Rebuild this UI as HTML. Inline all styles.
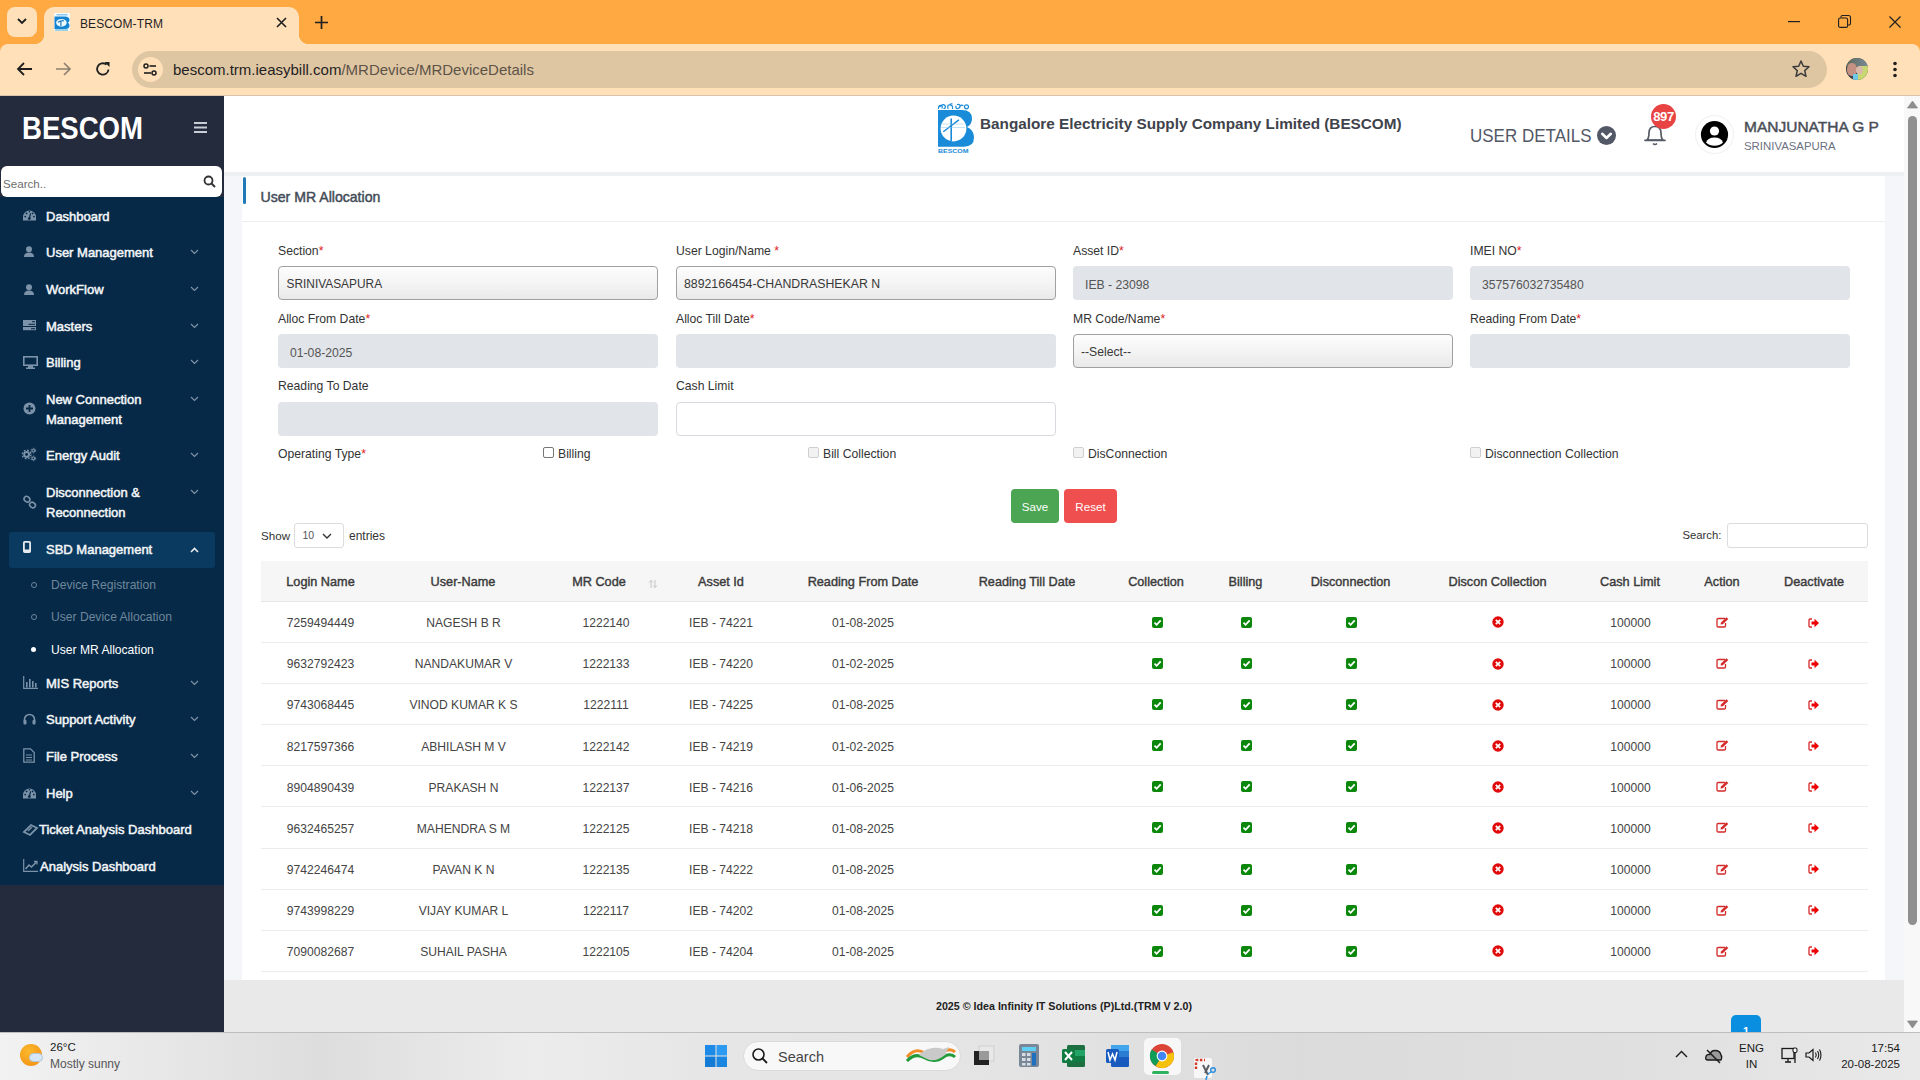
<!DOCTYPE html>
<html><head><meta charset="utf-8"><title>BESCOM-TRM</title>
<style>
*{box-sizing:border-box;margin:0;padding:0}
html,body{width:1920px;height:1080px;overflow:hidden;background:#f4f6f9;font-family:"Liberation Sans",sans-serif}
.a{position:absolute}
svg.a{overflow:visible}
.t{position:absolute;white-space:nowrap;line-height:1;font-family:"Liberation Sans",sans-serif}
</style></head><body>
<div class="a" style="left:0px;top:0px;width:1920px;height:56px;background:#ffa943"></div>
<div class="a" style="left:0px;top:44px;width:1920px;height:52px;background:#ffe0b9;border-radius:8px 8px 0 0"></div>
<div class="a" style="left:0px;top:95px;width:1920px;height:1px;background:#d8c4a8"></div>
<div class="a" style="left:7px;top:7px;width:30px;height:30px;background:#ffe0b9;border-radius:8px"></div>
<svg class="a" style="left:16px;top:17px;" width="12" height="8" viewBox="0 0 12 8"><path d="M2 2 L6 6 L10 2" stroke="#1f1f1f" stroke-width="1.8" fill="none"/></svg>
<div class="a" style="left:44px;top:7px;width:255px;height:40px;background:#ffe0b9;border-radius:10px 10px 0 0"></div>
<div class="a" style="left:34px;top:34px;width:10px;height:10px;background:radial-gradient(circle at 0 0, #ffa943 10px, #ffe0b9 10.5px)"></div>
<div class="a" style="left:299px;top:34px;width:10px;height:10px;background:radial-gradient(circle at 100% 0, #ffa943 10px, #ffe0b9 10.5px)"></div>
<svg class="a" style="left:54px;top:13px;" width="16" height="18" viewBox="0 0 16 18"><rect x="0" y="0" width="16" height="18" fill="#f4fbff"/><path d="M0.5 3.5 H11 Q15.5 3.5 15.5 7 Q15.5 9 13.8 9.7 Q15.5 10.5 15.5 12.5 Q15.5 16 11 16 H0.5 Z" fill="#1484d0"/><ellipse cx="7.4" cy="9.8" rx="5.3" ry="3.9" fill="#eafaff"/><path d="M4 9.3 Q7 7.3 9.8 7.8 M6.9 8.3 V13.2" stroke="#2a7ab8" stroke-width="1.2" fill="none"/><rect x="2.5" y="1" width="11" height="1.5" fill="#8cc8f0"/><rect x="1" y="16.3" width="13" height="1.4" fill="#70c0e0"/></svg>
<div class="t" style="left:80px;top:17.84px;font-size:12px;font-weight:normal;color:#1f1f1f;letter-spacing:0.1px">BESCOM-TRM</div>
<svg class="a" style="left:275px;top:16px;" width="13" height="13" viewBox="0 0 13 13"><path d="M2 2 L11 11 M11 2 L2 11" stroke="#1f1f1f" stroke-width="1.6"/></svg>
<svg class="a" style="left:314px;top:15px;" width="15" height="15" viewBox="0 0 15 15"><path d="M7.5 1 V14 M1 7.5 H14" stroke="#1f1f1f" stroke-width="1.7"/></svg>
<svg class="a" style="left:1788px;top:21px;" width="12" height="2" viewBox="0 0 12 2"><rect width="12" height="1.2" fill="#1f1f1f"/></svg>
<svg class="a" style="left:1838px;top:15px;" width="13" height="13" viewBox="0 0 13 13"><rect x="0.6" y="3" width="9" height="9.4" rx="1.5" fill="none" stroke="#1f1f1f" stroke-width="1.1"/><path d="M3 2.5 V2 a1.5 1.5 0 0 1 1.5 -1.5 H10.5 a2 2 0 0 1 2 2 V8.5 a1.5 1.5 0 0 1 -1.5 1.5 H10" fill="none" stroke="#1f1f1f" stroke-width="1.1"/></svg>
<svg class="a" style="left:1889px;top:16px;" width="12" height="12" viewBox="0 0 12 12"><path d="M0.5 0.5 L11.5 11.5 M11.5 0.5 L0.5 11.5" stroke="#1f1f1f" stroke-width="1.2"/></svg>
<svg class="a" style="left:16px;top:61px;" width="17" height="16" viewBox="0 0 17 16"><path d="M16 8 H2 M8 2 L2 8 L8 14" stroke="#1f1f1f" stroke-width="1.8" fill="none"/></svg>
<svg class="a" style="left:55px;top:61px;" width="17" height="16" viewBox="0 0 17 16"><path d="M1 8 H15 M9 2 L15 8 L9 14" stroke="#8c7f6f" stroke-width="1.6" fill="none"/></svg>
<svg class="a" style="left:95px;top:61px;" width="16" height="16" viewBox="0 0 16 16"><path d="M13.5 8.5 A5.7 5.7 0 1 1 11.5 3.6" stroke="#1f1f1f" stroke-width="1.8" fill="none"/><path d="M9.5 1 H14.5 V6 Z" fill="#1f1f1f"/></svg>
<div class="a" style="left:132px;top:51px;width:1695px;height:37px;background:#dfc6a3;border-radius:19px"></div>
<div class="a" style="left:138px;top:57px;width:25px;height:25px;background:#ffe0b9;border-radius:50%"></div>
<svg class="a" style="left:142px;top:61px;" width="17" height="17" viewBox="0 0 17 17"><circle cx="4" cy="5" r="2" fill="none" stroke="#1f1f1f" stroke-width="1.5"/><path d="M7.5 5 H14" stroke="#1f1f1f" stroke-width="1.6"/><circle cx="12" cy="12" r="2" fill="none" stroke="#1f1f1f" stroke-width="1.5"/><path d="M2 12 H9" stroke="#1f1f1f" stroke-width="1.6"/></svg>
<div class="t" style="left:173px;top:61.80px;font-size:15px;font-weight:normal;color:#1f1f1f;">bescom.trm.ieasybill.com<span style="color:#5c5347">/MRDevice/MRDeviceDetails</span></div>
<svg class="a" style="left:1791px;top:59px;" width="20" height="20" viewBox="0 0 20 20"><path d="M10 2 L12.3 7.3 L18 7.8 L13.7 11.6 L15 17.3 L10 14.3 L5 17.3 L6.3 11.6 L2 7.8 L7.7 7.3 Z" fill="none" stroke="#3b3b3b" stroke-width="1.5" stroke-linejoin="round"/></svg>
<div class="a" style="left:1846px;top:58px;width:22px;height:22px;border-radius:50%;overflow:hidden;background:#3a4048"><div class="a" style="left:12px;top:6px;width:12px;height:16px;background:#c8d870"></div><div class="a" style="left:0;top:0;width:22px;height:8px;background:linear-gradient(90deg,#5a6a58,#7a8a98)"></div><div class="a" style="left:1px;top:5px;width:10px;height:13px;border-radius:45%;background:#c49080"></div><div class="a" style="left:10px;top:8px;width:7px;height:8px;border-radius:45%;background:#d8b8a8"></div><div class="a" style="left:7px;top:16px;width:5px;height:8px;background:#70c8e8"></div></div>
<svg class="a" style="left:1892px;top:61px;" width="6" height="17" viewBox="0 0 6 17"><circle cx="3" cy="2.5" r="1.8" fill="#1f1f1f"/><circle cx="3" cy="8.5" r="1.8" fill="#1f1f1f"/><circle cx="3" cy="14.5" r="1.8" fill="#1f1f1f"/></svg>
<div class="a" style="left:0px;top:96px;width:224px;height:936px;background:#232b3d"></div>
<div class="a" style="left:0px;top:197px;width:224px;height:688px;background:#052947"></div>
<div class="t" style="left:22px;top:112.84px;font-size:31.5px;font-weight:bold;color:#ffffff;transform:scaleX(0.875);transform-origin:0 0">BESCOM</div>
<svg class="a" style="left:194px;top:122px;" width="13" height="11" viewBox="0 0 13 11"><rect y="0" width="13" height="2" fill="#c9ced6"/><rect y="4.5" width="13" height="2" fill="#c9ced6"/><rect y="9" width="13" height="2" fill="#c9ced6"/></svg>
<div class="a" style="left:1px;top:166px;width:221px;height:31px;background:#fff;border-radius:6px"></div>
<div class="t" style="left:3px;top:177.68px;font-size:11.6px;font-weight:normal;color:#6d6d6d;">Search..</div>
<svg class="a" style="left:203px;top:175px;" width="13" height="13" viewBox="0 0 13 13"><circle cx="5.5" cy="5.5" r="4" fill="none" stroke="#333" stroke-width="1.8"/><path d="M8.5 8.5 L12 12" stroke="#333" stroke-width="2"/></svg>
<div class="t" style="left:46px;top:210.40px;font-size:13px;font-weight:normal;color:#f3f5f7;-webkit-text-stroke:0.5px #f3f5f7">Dashboard</div>
<svg class="a" style="left:23px;top:210px;" width="13" height="11" viewBox="0 0 13 11"><path d="M0 10.5 V7 A6.5 6.5 0 0 1 13 7 V10.5 Z" fill="#7b92a8"/><path d="M6.3 8.5 L7.6 3.3" stroke="#052947" stroke-width="1.2"/><circle cx="6.3" cy="8.6" r="1.4" fill="#052947"/><circle cx="2.2" cy="6.6" r="0.9" fill="#052947"/><circle cx="3.6" cy="3.4" r="0.9" fill="#052947"/><circle cx="6.5" cy="1.8" r="0.8" fill="#052947"/><circle cx="9.6" cy="3.4" r="0.9" fill="#052947"/><circle cx="10.9" cy="6.6" r="0.9" fill="#052947"/></svg>
<div class="t" style="left:46px;top:246.40px;font-size:13px;font-weight:normal;color:#f3f5f7;-webkit-text-stroke:0.5px #f3f5f7">User Management</div>
<svg class="a" style="left:24px;top:246px;" width="10" height="11" viewBox="0 0 10 11"><circle cx="5" cy="3.2" r="3" fill="#7b92a8"/><path d="M0 11 Q0 6.5 5 6.5 Q10 6.5 10 11 Z" fill="#7b92a8"/></svg>
<svg class="a" style="left:190px;top:249px;" width="9" height="6" viewBox="0 0 9 6"><path d="M1 1 L4.5 4.5 L8 1" stroke="#8093a6" stroke-width="1.2" fill="none"/></svg>
<div class="t" style="left:46px;top:283.40px;font-size:13px;font-weight:normal;color:#f3f5f7;-webkit-text-stroke:0.5px #f3f5f7">WorkFlow</div>
<svg class="a" style="left:24px;top:284px;" width="10" height="11" viewBox="0 0 10 11"><circle cx="5" cy="3.2" r="3" fill="#7b92a8"/><path d="M0 11 Q0 6.5 5 6.5 Q10 6.5 10 11 Z" fill="#7b92a8"/></svg>
<svg class="a" style="left:190px;top:286px;" width="9" height="6" viewBox="0 0 9 6"><path d="M1 1 L4.5 4.5 L8 1" stroke="#8093a6" stroke-width="1.2" fill="none"/></svg>
<div class="t" style="left:46px;top:320.40px;font-size:13px;font-weight:normal;color:#f3f5f7;-webkit-text-stroke:0.5px #f3f5f7">Masters</div>
<svg class="a" style="left:23px;top:320px;" width="13" height="11" viewBox="0 0 13 11"><rect x="0" y="0" width="13" height="6" fill="#7b92a8"/><rect x="0" y="7" width="13" height="3.2" fill="#7b92a8"/><rect x="9" y="1.2" width="3" height="1" fill="#052947"/><rect x="5.5" y="3.8" width="6.5" height="1" fill="#052947"/><rect x="8" y="8.2" width="4" height="1" fill="#052947"/></svg>
<svg class="a" style="left:190px;top:323px;" width="9" height="6" viewBox="0 0 9 6"><path d="M1 1 L4.5 4.5 L8 1" stroke="#8093a6" stroke-width="1.2" fill="none"/></svg>
<div class="t" style="left:46px;top:356.40px;font-size:13px;font-weight:normal;color:#f3f5f7;-webkit-text-stroke:0.5px #f3f5f7">Billing</div>
<svg class="a" style="left:23px;top:356px;" width="15" height="13" viewBox="0 0 15 13"><rect x="0.8" y="0.8" width="13.4" height="8.4" fill="none" stroke="#7b92a8" stroke-width="1.6"/><rect x="5" y="10" width="5" height="2" fill="#7b92a8"/><rect x="3" y="11.5" width="9" height="1.5" fill="#7b92a8"/></svg>
<svg class="a" style="left:190px;top:359px;" width="9" height="6" viewBox="0 0 9 6"><path d="M1 1 L4.5 4.5 L8 1" stroke="#8093a6" stroke-width="1.2" fill="none"/></svg>
<div class="t" style="left:46px;top:393.40px;font-size:13px;font-weight:normal;color:#f3f5f7;-webkit-text-stroke:0.5px #f3f5f7">New Connection</div>
<div class="t" style="left:46px;top:413.40px;font-size:13px;font-weight:normal;color:#f3f5f7;-webkit-text-stroke:0.5px #f3f5f7">Management</div>
<svg class="a" style="left:23px;top:402px;" width="13" height="13" viewBox="0 0 13 13"><circle cx="6.5" cy="6.5" r="6" fill="#7b92a8"/><path d="M6.5 3 V10 M3 6.5 H10" stroke="#052947" stroke-width="1.8"/></svg>
<svg class="a" style="left:190px;top:396px;" width="9" height="6" viewBox="0 0 9 6"><path d="M1 1 L4.5 4.5 L8 1" stroke="#8093a6" stroke-width="1.2" fill="none"/></svg>
<div class="t" style="left:46px;top:449.40px;font-size:13px;font-weight:normal;color:#f3f5f7;-webkit-text-stroke:0.5px #f3f5f7">Energy Audit</div>
<svg class="a" style="left:22px;top:448px;" width="14" height="13" viewBox="0 0 14 13"><circle cx="4.6" cy="6.5" r="3.4" fill="#7b92a8"/><circle cx="4.6" cy="6.5" r="4.3" fill="none" stroke="#7b92a8" stroke-width="1.4" stroke-dasharray="1.7 1.68"/><circle cx="4.6" cy="6.5" r="1.4" fill="#052947"/><circle cx="11.3" cy="2.6" r="1.9" fill="#7b92a8"/><circle cx="11.3" cy="2.6" r="2.4" fill="none" stroke="#7b92a8" stroke-width="1" stroke-dasharray="1.2 1.3"/><circle cx="11.3" cy="2.6" r="0.8" fill="#052947"/><circle cx="11.3" cy="10.4" r="1.9" fill="#7b92a8"/><circle cx="11.3" cy="10.4" r="2.4" fill="none" stroke="#7b92a8" stroke-width="1" stroke-dasharray="1.2 1.3"/><circle cx="11.3" cy="10.4" r="0.8" fill="#052947"/></svg>
<svg class="a" style="left:190px;top:452px;" width="9" height="6" viewBox="0 0 9 6"><path d="M1 1 L4.5 4.5 L8 1" stroke="#8093a6" stroke-width="1.2" fill="none"/></svg>
<div class="t" style="left:46px;top:486.40px;font-size:13px;font-weight:normal;color:#f3f5f7;-webkit-text-stroke:0.5px #f3f5f7">Disconnection &amp;</div>
<div class="t" style="left:46px;top:506.40px;font-size:13px;font-weight:normal;color:#f3f5f7;-webkit-text-stroke:0.5px #f3f5f7">Reconnection</div>
<svg class="a" style="left:23px;top:496px;" width="14" height="13" viewBox="0 0 14 13"><rect x="0.8" y="0.8" width="6" height="5" rx="2.5" transform="rotate(40 4 3.5)" fill="none" stroke="#7b92a8" stroke-width="1.6"/><rect x="6.5" y="6.5" width="6" height="5" rx="2.5" transform="rotate(40 9.5 9)" fill="none" stroke="#7b92a8" stroke-width="1.6"/></svg>
<svg class="a" style="left:190px;top:489px;" width="9" height="6" viewBox="0 0 9 6"><path d="M1 1 L4.5 4.5 L8 1" stroke="#8093a6" stroke-width="1.2" fill="none"/></svg>
<div class="a" style="left:9px;top:532px;width:206px;height:36px;background:#0a3a60;border-radius:3px"></div>
<div class="t" style="left:46px;top:542.80px;font-size:13px;font-weight:normal;color:#f3f5f7;-webkit-text-stroke:0.5px #f3f5f7">SBD Management</div>
<svg class="a" style="left:23px;top:541px;" width="8" height="12" viewBox="0 0 8 12"><rect x="0.9" y="0.9" width="6.2" height="10.2" rx="0.8" fill="none" stroke="#e6eaee" stroke-width="1.8"/><rect x="1" y="8.5" width="6" height="2.6" fill="#e6eaee"/></svg>
<svg class="a" style="left:190px;top:547px;" width="9" height="6" viewBox="0 0 9 6"><path d="M1 5 L4.5 1.5 L8 5" stroke="#e8ecf0" stroke-width="1.6" fill="none"/></svg>
<div class="t" style="left:51px;top:578.56px;font-size:12.1px;font-weight:normal;color:#6f879c;">Device Registration</div>
<div class="a" style="left:31px;top:581.5px;width:6px;height:6px;border:1.3px solid #6f879c;border-radius:50%"></div>
<div class="t" style="left:51px;top:610.56px;font-size:12.1px;font-weight:normal;color:#6f879c;">User Device Allocation</div>
<div class="a" style="left:31px;top:613.5px;width:6px;height:6px;border:1.3px solid #6f879c;border-radius:50%"></div>
<div class="t" style="left:51px;top:643.56px;font-size:12.1px;font-weight:normal;color:#ffffff;">User MR Allocation</div>
<div class="a" style="left:31px;top:647px;width:5px;height:5px;background:#fff;border-radius:50%"></div>
<div class="t" style="left:46px;top:677.40px;font-size:13px;font-weight:normal;color:#f3f5f7;-webkit-text-stroke:0.5px #f3f5f7">MIS Reports</div>
<svg class="a" style="left:23px;top:676px;" width="15" height="13" viewBox="0 0 15 13"><path d="M0.7 0 V12.3 H15" stroke="#7b92a8" stroke-width="1.2" fill="none"/><rect x="3" y="6" width="1.6" height="5.5" fill="#7b92a8"/><rect x="6" y="3" width="1.6" height="8.5" fill="#7b92a8"/><rect x="9" y="5" width="1.6" height="6.5" fill="#7b92a8"/><rect x="12" y="7" width="1.6" height="4.5" fill="#7b92a8"/></svg>
<svg class="a" style="left:190px;top:680px;" width="9" height="6" viewBox="0 0 9 6"><path d="M1 1 L4.5 4.5 L8 1" stroke="#8093a6" stroke-width="1.2" fill="none"/></svg>
<div class="t" style="left:46px;top:713.40px;font-size:13px;font-weight:normal;color:#f3f5f7;-webkit-text-stroke:0.5px #f3f5f7">Support Activity</div>
<svg class="a" style="left:23px;top:713px;" width="13" height="12" viewBox="0 0 13 12"><path d="M1.5 9 V6.5 A5 5 0 0 1 11.5 6.5 V9" stroke="#7b92a8" stroke-width="1.7" fill="none"/><rect x="0.5" y="7" width="3" height="4.5" rx="1" fill="#7b92a8"/><rect x="9.5" y="7" width="3" height="4.5" rx="1" fill="#7b92a8"/></svg>
<svg class="a" style="left:190px;top:716px;" width="9" height="6" viewBox="0 0 9 6"><path d="M1 1 L4.5 4.5 L8 1" stroke="#8093a6" stroke-width="1.2" fill="none"/></svg>
<div class="t" style="left:46px;top:750.40px;font-size:13px;font-weight:normal;color:#f3f5f7;-webkit-text-stroke:0.5px #f3f5f7">File Process</div>
<svg class="a" style="left:23px;top:748px;" width="12" height="15" viewBox="0 0 12 15"><path d="M0.8 0.8 H7.5 L11.2 4.5 V14.2 H0.8 Z" fill="none" stroke="#7b92a8" stroke-width="1.3"/><path d="M3 7 H9 M3 9.5 H9 M3 12 H9" stroke="#7b92a8" stroke-width="1"/></svg>
<svg class="a" style="left:190px;top:753px;" width="9" height="6" viewBox="0 0 9 6"><path d="M1 1 L4.5 4.5 L8 1" stroke="#8093a6" stroke-width="1.2" fill="none"/></svg>
<div class="t" style="left:46px;top:787.40px;font-size:13px;font-weight:normal;color:#f3f5f7;-webkit-text-stroke:0.5px #f3f5f7">Help</div>
<svg class="a" style="left:23px;top:788px;" width="13" height="11" viewBox="0 0 13 11"><path d="M0 10.5 V7 A6.5 6.5 0 0 1 13 7 V10.5 Z" fill="#7b92a8"/><path d="M6.3 8.5 L7.6 3.3" stroke="#052947" stroke-width="1.2"/><circle cx="6.3" cy="8.6" r="1.4" fill="#052947"/><circle cx="2.2" cy="6.6" r="0.9" fill="#052947"/><circle cx="3.6" cy="3.4" r="0.9" fill="#052947"/><circle cx="6.5" cy="1.8" r="0.8" fill="#052947"/><circle cx="9.6" cy="3.4" r="0.9" fill="#052947"/><circle cx="10.9" cy="6.6" r="0.9" fill="#052947"/></svg>
<svg class="a" style="left:190px;top:790px;" width="9" height="6" viewBox="0 0 9 6"><path d="M1 1 L4.5 4.5 L8 1" stroke="#8093a6" stroke-width="1.2" fill="none"/></svg>
<div class="t" style="left:39px;top:823.40px;font-size:13px;font-weight:normal;color:#f3f5f7;-webkit-text-stroke:0.5px #f3f5f7">Ticket Analysis Dashboard</div>
<svg class="a" style="left:23px;top:823px;" width="15" height="13" viewBox="0 0 15 13"><path d="M1 9 L8 2 L14 5 L7 12 Z" fill="none" stroke="#7b92a8" stroke-width="1.8"/><path d="M5 8 L9 4" stroke="#7b92a8" stroke-width="1.5"/></svg>
<div class="t" style="left:40px;top:860.20px;font-size:13px;font-weight:normal;color:#f3f5f7;-webkit-text-stroke:0.5px #f3f5f7">Analysis Dashboard</div>
<svg class="a" style="left:23px;top:859px;" width="15" height="13" viewBox="0 0 15 13"><path d="M0.7 0 V12.3 H15" stroke="#7b92a8" stroke-width="1.2" fill="none"/><path d="M2.5 10 L6 6 L8.5 8 L13.5 3" stroke="#7b92a8" stroke-width="1.6" fill="none"/><path d="M11 2.5 H14 V5.5" stroke="#7b92a8" stroke-width="1.3" fill="none"/></svg>
<div class="a" style="left:224px;top:96px;width:1680px;height:77px;background:#ffffff"></div>
<div class="a" style="left:224px;top:172px;width:1680px;height:4px;background:#eef0f3"></div>
<svg class="a" style="left:937px;top:103px;" width="40" height="52" viewBox="0 0 40 52"><g fill="none" stroke="#1a8bd8" stroke-width="1.2" stroke-linecap="round">
<path d="M1.5 5.5 Q1.5 2 4 2.5 Q6 3 5 5 M3 3.5 Q6 0.5 8 2.5 Q9 5 7 5.5"/>
<path d="M11 5.5 Q10 1.5 13 1.8 Q16 2 15.5 5.5 M12.5 2 Q13 0.5 15 0.8"/>
<path d="M19 3 Q18.5 6 21 5.5 Q23.5 5 23 2.5 Q22.5 1 20.5 1.5 M23 3 Q24.5 1.5 26 2.5"/>
<circle cx="29.5" cy="3.8" r="2"/></g>
<path d="M1 7 H25 Q35 7 35 15.5 Q35 21.5 30 24 Q37 27 37 34.5 Q37 43.7 27 43.7 H1 Z" fill="#1a8bd8"/>
<circle cx="16.5" cy="25.5" r="12.9" fill="#fff"/>
<path d="M14.2 15.5 V38" stroke="#1a8bd8" stroke-width="1.6"/><path d="M6.3 28.7 L21.9 16.9" stroke="#1a8bd8" stroke-width="1.4"/>
<path d="M4.5 21 H27 M4 24.5 H28" stroke="#8cc4ea" stroke-width="0.5"/>
<text x="1" y="49.6" font-size="5.8" fill="#1a8bd8" font-family="Liberation Sans" font-weight="bold" textLength="30.5" lengthAdjust="spacingAndGlyphs">BESCOM</text></svg>
<div class="t" style="left:980px;top:115.85px;font-size:15.3px;font-weight:bold;color:#3f434b;">Bangalore Electricity Supply Company Limited (BESCOM)</div>
<div class="t" style="left:1470px;top:127.61px;font-size:17px;font-weight:normal;color:#535866;transform:scaleY(1.12);transform-origin:0 80%">USER DETAILS</div>
<svg class="a" style="left:1597px;top:126px;" width="19" height="19" viewBox="0 0 19 19"><circle cx="9.5" cy="9.5" r="9.5" fill="#535866"/><path d="M5.2 7.8 L9.5 12 L13.8 7.8" stroke="#fff" stroke-width="2.6" fill="none" stroke-linecap="round" stroke-linejoin="round"/></svg>
<svg class="a" style="left:1643px;top:122px;" width="24" height="25" viewBox="0 0 24 25"><path d="M4 18 Q6 16 6 11 Q6 4.5 12 4.5 Q18 4.5 18 11 Q18 16 20 18 Z" fill="none" stroke="#555a66" stroke-width="1.7" stroke-linejoin="round"/><path d="M2 18.3 H22" stroke="#555a66" stroke-width="1.7" stroke-linecap="round"/><path d="M10 21.5 Q12 23.5 14 21.5" stroke="#555a66" stroke-width="1.6" fill="none"/></svg>
<div class="a" style="left:1651px;top:104px;width:25px;height:25px;background:#e84444;border-radius:50%"></div>
<div class="t" style="left:1663.5px;top:110.00px;font-size:13px;font-weight:bold;color:#fff;transform:translateX(-50%);letter-spacing:-0.4px">897</div>
<div class="a" style="left:1695px;top:115px;width:39px;height:39px;background:#fff;border:1px solid #efefef;border-radius:50%"></div>
<svg class="a" style="left:1700px;top:120px;" width="29" height="29" viewBox="0 0 29 29"><circle cx="14.5" cy="14.5" r="13.6" fill="#000"/><circle cx="14.5" cy="11" r="4.6" fill="#fff"/><path d="M6 22.5 Q8 17.5 14.5 17.5 Q21 17.5 23 22.5 Q19.5 25.8 14.5 25.8 Q9.5 25.8 6 22.5 Z" fill="#fff"/></svg>
<div class="t" style="left:1744px;top:119.08px;font-size:15.5px;font-weight:normal;color:#4a4e57;-webkit-text-stroke:0.45px #4a4e57">MANJUNATHA G P</div>
<div class="t" style="left:1744px;top:141.35px;font-size:11.4px;font-weight:normal;color:#6c7182;">SRINIVASAPURA</div>
<div class="a" style="left:1904px;top:96px;width:16px;height:936px;background:#f8f8f8"></div>
<svg class="a" style="left:1907px;top:100px;" width="11" height="9" viewBox="0 0 11 9"><path d="M0.5 8 L5.5 1 L10.5 8 Z" fill="#8d8d8d" stroke="#8d8d8d" stroke-width="0.8" stroke-linejoin="round"/></svg>
<div class="a" style="left:1908px;top:116px;width:9px;height:809px;background:#8f8f8f;border-radius:5px"></div>
<svg class="a" style="left:1907px;top:1020px;" width="11" height="9" viewBox="0 0 11 9"><path d="M0.5 1 L5.5 8 L10.5 1 Z" fill="#8d8d8d" stroke="#8d8d8d" stroke-width="0.8" stroke-linejoin="round"/></svg>
<div class="a" style="left:224px;top:176px;width:1680px;height:804px;background:#f4f6f9"></div>
<div class="a" style="left:242px;top:176px;width:1643px;height:804px;background:#ffffff"></div>
<div class="a" style="left:243px;top:177px;width:3px;height:27px;background:#2279b8;border-radius:2px"></div>
<div class="t" style="left:260.5px;top:190.06px;font-size:14.1px;font-weight:normal;color:#434b57;-webkit-text-stroke:0.45px #434b57">User MR Allocation</div>
<div class="a" style="left:242px;top:221px;width:1643px;height:1px;background:#eceef1"></div>
<div class="t" style="left:278px;top:244.67px;font-size:12.2px;font-weight:normal;color:#333;">Section<span style="color:#e02424">*</span></div>
<div class="a" style="left:278px;top:266px;width:380px;height:34px;background:linear-gradient(#fdfdfd 0%,#f4f4f4 50%,#e9e9e9 100%);border:1px solid #a0a0a0;border-radius:4px"></div>
<div class="t" style="left:286.5px;top:278.53px;font-size:11.9px;font-weight:normal;color:#383838;">SRINIVASAPURA</div>
<div class="t" style="left:676px;top:244.67px;font-size:12.2px;font-weight:normal;color:#333;">User Login/Name <span style="color:#e02424">*</span></div>
<div class="a" style="left:676px;top:266px;width:380px;height:34px;background:linear-gradient(#fdfdfd 0%,#f4f4f4 50%,#e9e9e9 100%);border:1px solid #a0a0a0;border-radius:4px"></div>
<div class="t" style="left:684px;top:278.19px;font-size:12.3px;font-weight:normal;color:#383838;">8892166454-CHANDRASHEKAR N</div>
<div class="t" style="left:1073px;top:244.67px;font-size:12.2px;font-weight:normal;color:#333;">Asset ID<span style="color:#e02424">*</span></div>
<div class="a" style="left:1073px;top:266px;width:380px;height:34px;background:#e1e4e8;border-radius:4px"></div>
<div class="t" style="left:1085px;top:278.67px;font-size:12.2px;font-weight:normal;color:#555;">IEB - 23098</div>
<div class="t" style="left:1470px;top:244.67px;font-size:12.2px;font-weight:normal;color:#333;">IMEI NO<span style="color:#e02424">*</span></div>
<div class="a" style="left:1470px;top:266px;width:380px;height:34px;background:#e1e4e8;border-radius:4px"></div>
<div class="t" style="left:1482px;top:278.67px;font-size:12.2px;font-weight:normal;color:#555;">357576032735480</div>
<div class="t" style="left:278px;top:312.67px;font-size:12.2px;font-weight:normal;color:#333;">Alloc From Date<span style="color:#e02424">*</span></div>
<div class="a" style="left:278px;top:334px;width:380px;height:34px;background:#e1e4e8;border-radius:4px"></div>
<div class="t" style="left:290px;top:346.67px;font-size:12.2px;font-weight:normal;color:#555;">01-08-2025</div>
<div class="t" style="left:676px;top:312.67px;font-size:12.2px;font-weight:normal;color:#333;">Alloc Till Date<span style="color:#e02424">*</span></div>
<div class="a" style="left:676px;top:334px;width:380px;height:34px;background:#e1e4e8;border-radius:4px"></div>
<div class="t" style="left:1073px;top:312.67px;font-size:12.2px;font-weight:normal;color:#333;">MR Code/Name<span style="color:#e02424">*</span></div>
<div class="a" style="left:1073px;top:334px;width:380px;height:34px;background:linear-gradient(#fdfdfd 0%,#f4f4f4 50%,#e9e9e9 100%);border:1px solid #a0a0a0;border-radius:4px"></div>
<div class="t" style="left:1081px;top:345.67px;font-size:12.2px;font-weight:normal;color:#383838;">--Select--</div>
<div class="t" style="left:1470px;top:312.67px;font-size:12.2px;font-weight:normal;color:#333;">Reading From Date<span style="color:#e02424">*</span></div>
<div class="a" style="left:1470px;top:334px;width:380px;height:34px;background:#e1e4e8;border-radius:4px"></div>
<div class="t" style="left:278px;top:379.67px;font-size:12.2px;font-weight:normal;color:#333;">Reading To Date</div>
<div class="a" style="left:278px;top:402px;width:380px;height:34px;background:#e1e4e8;border-radius:4px"></div>
<div class="t" style="left:676px;top:379.67px;font-size:12.2px;font-weight:normal;color:#333;">Cash Limit</div>
<div class="a" style="left:676px;top:402px;width:380px;height:34px;background:#fff;border:1px solid #d7dade;border-radius:4px"></div>
<div class="t" style="left:278px;top:447.67px;font-size:12.2px;font-weight:normal;color:#333;">Operating Type<span style="color:#e02424">*</span></div>
<div class="a" style="left:543px;top:447px;width:11px;height:11px;background:#fff;border:1px solid #767676;border-radius:2px"></div>
<div class="t" style="left:558px;top:447.67px;font-size:12.2px;font-weight:normal;color:#333;">Billing</div>
<div class="a" style="left:808px;top:447px;width:11px;height:11px;background:#f2f2f2;border:1px solid #cfcfcf;border-radius:2px"></div>
<div class="t" style="left:823px;top:447.67px;font-size:12.2px;font-weight:normal;color:#333;">Bill Collection</div>
<div class="a" style="left:1073px;top:447px;width:11px;height:11px;background:#f2f2f2;border:1px solid #cfcfcf;border-radius:2px"></div>
<div class="t" style="left:1088px;top:447.67px;font-size:12.2px;font-weight:normal;color:#333;">DisConnection</div>
<div class="a" style="left:1470px;top:447px;width:11px;height:11px;background:#f2f2f2;border:1px solid #cfcfcf;border-radius:2px"></div>
<div class="t" style="left:1485px;top:447.67px;font-size:12.2px;font-weight:normal;color:#333;">Disconnection Collection</div>
<div class="a" style="left:1011px;top:489px;width:48px;height:34px;background:#4ba552;border-radius:4px"></div>
<div class="t" style="left:1035px;top:501.48px;font-size:11.6px;font-weight:normal;color:#fff;transform:translateX(-50%);">Save</div>
<div class="a" style="left:1064px;top:489px;width:53px;height:34px;background:#f04f4f;border-radius:4px"></div>
<div class="t" style="left:1090.5px;top:501.48px;font-size:11.6px;font-weight:normal;color:#fff;transform:translateX(-50%);">Reset</div>
<div class="t" style="left:261px;top:530.18px;font-size:11.6px;font-weight:normal;color:#333;">Show</div>
<div class="a" style="left:294px;top:523px;width:50px;height:25px;background:#fff;border:1px solid #dcdcdc;border-radius:3px"></div>
<div class="t" style="left:302.5px;top:529.61px;font-size:10.5px;font-weight:normal;color:#555;">10</div>
<svg class="a" style="left:322px;top:533px;" width="10" height="6" viewBox="0 0 10 6"><path d="M1 1 L5 5 L9 1" stroke="#333" stroke-width="1.4" fill="none"/></svg>
<div class="t" style="left:349px;top:529.84px;font-size:12px;font-weight:normal;color:#333;">entries</div>
<div class="t" style="left:1682.5px;top:530.43px;font-size:11.3px;font-weight:normal;color:#333;">Search:</div>
<div class="a" style="left:1727px;top:523px;width:141px;height:25px;background:#fff;border:1px solid #dcdcdc;border-radius:3px"></div>
<div class="a" style="left:261px;top:561px;width:1607px;height:40px;background:#f6f6f6"></div>
<div class="a" style="left:261px;top:601px;width:1607px;height:1px;background:#e6e6e6"></div>
<div class="t" style="left:320.5px;top:575.75px;font-size:12.7px;font-weight:normal;color:#3a3a3a;transform:translateX(-50%);-webkit-text-stroke:0.4px #3a3a3a">Login Name</div>
<div class="t" style="left:463px;top:575.75px;font-size:12.7px;font-weight:normal;color:#3a3a3a;transform:translateX(-50%);-webkit-text-stroke:0.4px #3a3a3a">User-Name</div>
<div class="t" style="left:599px;top:575.75px;font-size:12.7px;font-weight:normal;color:#3a3a3a;transform:translateX(-50%);-webkit-text-stroke:0.4px #3a3a3a">MR Code</div>
<div class="t" style="left:721px;top:575.75px;font-size:12.7px;font-weight:normal;color:#3a3a3a;transform:translateX(-50%);-webkit-text-stroke:0.4px #3a3a3a">Asset Id</div>
<div class="t" style="left:863px;top:575.75px;font-size:12.7px;font-weight:normal;color:#3a3a3a;transform:translateX(-50%);-webkit-text-stroke:0.4px #3a3a3a">Reading From Date</div>
<div class="t" style="left:1027px;top:575.75px;font-size:12.7px;font-weight:normal;color:#3a3a3a;transform:translateX(-50%);-webkit-text-stroke:0.4px #3a3a3a">Reading Till Date</div>
<div class="t" style="left:1156px;top:575.75px;font-size:12.7px;font-weight:normal;color:#3a3a3a;transform:translateX(-50%);-webkit-text-stroke:0.4px #3a3a3a">Collection</div>
<div class="t" style="left:1245.5px;top:575.75px;font-size:12.7px;font-weight:normal;color:#3a3a3a;transform:translateX(-50%);-webkit-text-stroke:0.4px #3a3a3a">Billing</div>
<div class="t" style="left:1350.5px;top:575.75px;font-size:12.7px;font-weight:normal;color:#3a3a3a;transform:translateX(-50%);-webkit-text-stroke:0.4px #3a3a3a">Disconnection</div>
<div class="t" style="left:1497.5px;top:575.75px;font-size:12.7px;font-weight:normal;color:#3a3a3a;transform:translateX(-50%);-webkit-text-stroke:0.4px #3a3a3a">Discon Collection</div>
<div class="t" style="left:1630px;top:575.75px;font-size:12.7px;font-weight:normal;color:#3a3a3a;transform:translateX(-50%);-webkit-text-stroke:0.4px #3a3a3a">Cash Limit</div>
<div class="t" style="left:1722px;top:575.75px;font-size:12.7px;font-weight:normal;color:#3a3a3a;transform:translateX(-50%);-webkit-text-stroke:0.4px #3a3a3a">Action</div>
<div class="t" style="left:1814px;top:575.75px;font-size:12.7px;font-weight:normal;color:#3a3a3a;transform:translateX(-50%);-webkit-text-stroke:0.4px #3a3a3a">Deactivate</div>
<svg class="a" style="left:648px;top:579px;" width="10" height="10" viewBox="0 0 10 10"><path d="M3 9 V1.5 M1 3.5 L3 1.5 L5 3.5" stroke="#c4c4c4" stroke-width="1" fill="none"/><path d="M7 1 V8.5 M5 6.5 L7 8.5 L9 6.5" stroke="#c4c4c4" stroke-width="1" fill="none"/></svg>
<div class="a" style="left:261px;top:642px;width:1607px;height:1px;background:#ececec"></div>
<div class="t" style="left:320.5px;top:617.26px;font-size:12.1px;font-weight:normal;color:#444;transform:translateX(-50%);">7259494449</div>
<div class="t" style="left:463.5px;top:617.26px;font-size:12.1px;font-weight:normal;color:#444;transform:translateX(-50%);">NAGESH B R</div>
<div class="t" style="left:606px;top:617.26px;font-size:12.1px;font-weight:normal;color:#444;transform:translateX(-50%);">1222140</div>
<div class="t" style="left:721px;top:617.26px;font-size:12.1px;font-weight:normal;color:#444;transform:translateX(-50%);">IEB - 74221</div>
<div class="t" style="left:863px;top:617.26px;font-size:12.1px;font-weight:normal;color:#444;transform:translateX(-50%);">01-08-2025</div>
<svg class="a" style="left:1151.5px;top:617px;" width="11" height="11" viewBox="0 0 11 11"><rect x="0" y="0" width="11" height="11" rx="2" fill="#0b870b"/><path d="M2.5 5.7 L4.6 7.8 L8.7 3.4" stroke="#fff" stroke-width="1.8" fill="none"/></svg>
<svg class="a" style="left:1240.5px;top:617px;" width="11" height="11" viewBox="0 0 11 11"><rect x="0" y="0" width="11" height="11" rx="2" fill="#0b870b"/><path d="M2.5 5.7 L4.6 7.8 L8.7 3.4" stroke="#fff" stroke-width="1.8" fill="none"/></svg>
<svg class="a" style="left:1345.5px;top:617px;" width="11" height="11" viewBox="0 0 11 11"><rect x="0" y="0" width="11" height="11" rx="2" fill="#0b870b"/><path d="M2.5 5.7 L4.6 7.8 L8.7 3.4" stroke="#fff" stroke-width="1.8" fill="none"/></svg>
<svg class="a" style="left:1492px;top:616px;" width="12" height="12" viewBox="0 0 12 12"><circle cx="6" cy="6" r="5.7" fill="#e10a0a"/><path d="M3.8 3.8 L8.2 8.2 M8.2 3.8 L3.8 8.2" stroke="#fff" stroke-width="1.7"/></svg>
<div class="t" style="left:1630.5px;top:617.26px;font-size:12.1px;font-weight:normal;color:#444;transform:translateX(-50%);">100000</div>
<svg class="a" style="left:1716px;top:617px;" width="13" height="11" viewBox="0 0 13 11"><path d="M9 1.5 H2.2 Q1 1.5 1 2.7 V8.8 Q1 10 2.2 10 H8.3 Q9.5 10 9.5 8.8 V6" stroke="#d42a2a" stroke-width="1.3" fill="none"/><path d="M4.5 7.5 L5 5.5 L10.5 0.3 L12.3 2 L6.8 7.3 Z" fill="#d42a2a"/></svg>
<svg class="a" style="left:1808px;top:618px;" width="12" height="10" viewBox="0 0 12 10"><path d="M4 1 H2 Q1 1 1 2 V8 Q1 9 2 9 H4" stroke="#d42a2a" stroke-width="1.3" fill="none"/><path d="M3.5 3.5 H6.5 V0.8 L11 5 L6.5 9.2 V6.5 H3.5 Z" fill="#e00"/></svg>
<div class="a" style="left:261px;top:683px;width:1607px;height:1px;background:#ececec"></div>
<div class="t" style="left:320.5px;top:658.36px;font-size:12.1px;font-weight:normal;color:#444;transform:translateX(-50%);">9632792423</div>
<div class="t" style="left:463.5px;top:658.36px;font-size:12.1px;font-weight:normal;color:#444;transform:translateX(-50%);">NANDAKUMAR V</div>
<div class="t" style="left:606px;top:658.36px;font-size:12.1px;font-weight:normal;color:#444;transform:translateX(-50%);">1222133</div>
<div class="t" style="left:721px;top:658.36px;font-size:12.1px;font-weight:normal;color:#444;transform:translateX(-50%);">IEB - 74220</div>
<div class="t" style="left:863px;top:658.36px;font-size:12.1px;font-weight:normal;color:#444;transform:translateX(-50%);">01-02-2025</div>
<svg class="a" style="left:1151.5px;top:658px;" width="11" height="11" viewBox="0 0 11 11"><rect x="0" y="0" width="11" height="11" rx="2" fill="#0b870b"/><path d="M2.5 5.7 L4.6 7.8 L8.7 3.4" stroke="#fff" stroke-width="1.8" fill="none"/></svg>
<svg class="a" style="left:1240.5px;top:658px;" width="11" height="11" viewBox="0 0 11 11"><rect x="0" y="0" width="11" height="11" rx="2" fill="#0b870b"/><path d="M2.5 5.7 L4.6 7.8 L8.7 3.4" stroke="#fff" stroke-width="1.8" fill="none"/></svg>
<svg class="a" style="left:1345.5px;top:658px;" width="11" height="11" viewBox="0 0 11 11"><rect x="0" y="0" width="11" height="11" rx="2" fill="#0b870b"/><path d="M2.5 5.7 L4.6 7.8 L8.7 3.4" stroke="#fff" stroke-width="1.8" fill="none"/></svg>
<svg class="a" style="left:1492px;top:658px;" width="12" height="12" viewBox="0 0 12 12"><circle cx="6" cy="6" r="5.7" fill="#e10a0a"/><path d="M3.8 3.8 L8.2 8.2 M8.2 3.8 L3.8 8.2" stroke="#fff" stroke-width="1.7"/></svg>
<div class="t" style="left:1630.5px;top:658.36px;font-size:12.1px;font-weight:normal;color:#444;transform:translateX(-50%);">100000</div>
<svg class="a" style="left:1716px;top:658px;" width="13" height="11" viewBox="0 0 13 11"><path d="M9 1.5 H2.2 Q1 1.5 1 2.7 V8.8 Q1 10 2.2 10 H8.3 Q9.5 10 9.5 8.8 V6" stroke="#d42a2a" stroke-width="1.3" fill="none"/><path d="M4.5 7.5 L5 5.5 L10.5 0.3 L12.3 2 L6.8 7.3 Z" fill="#d42a2a"/></svg>
<svg class="a" style="left:1808px;top:659px;" width="12" height="10" viewBox="0 0 12 10"><path d="M4 1 H2 Q1 1 1 2 V8 Q1 9 2 9 H4" stroke="#d42a2a" stroke-width="1.3" fill="none"/><path d="M3.5 3.5 H6.5 V0.8 L11 5 L6.5 9.2 V6.5 H3.5 Z" fill="#e00"/></svg>
<div class="a" style="left:261px;top:724px;width:1607px;height:1px;background:#ececec"></div>
<div class="t" style="left:320.5px;top:699.46px;font-size:12.1px;font-weight:normal;color:#444;transform:translateX(-50%);">9743068445</div>
<div class="t" style="left:463.5px;top:699.46px;font-size:12.1px;font-weight:normal;color:#444;transform:translateX(-50%);">VINOD KUMAR K S</div>
<div class="t" style="left:606px;top:699.46px;font-size:12.1px;font-weight:normal;color:#444;transform:translateX(-50%);">1222111</div>
<div class="t" style="left:721px;top:699.46px;font-size:12.1px;font-weight:normal;color:#444;transform:translateX(-50%);">IEB - 74225</div>
<div class="t" style="left:863px;top:699.46px;font-size:12.1px;font-weight:normal;color:#444;transform:translateX(-50%);">01-08-2025</div>
<svg class="a" style="left:1151.5px;top:699px;" width="11" height="11" viewBox="0 0 11 11"><rect x="0" y="0" width="11" height="11" rx="2" fill="#0b870b"/><path d="M2.5 5.7 L4.6 7.8 L8.7 3.4" stroke="#fff" stroke-width="1.8" fill="none"/></svg>
<svg class="a" style="left:1240.5px;top:699px;" width="11" height="11" viewBox="0 0 11 11"><rect x="0" y="0" width="11" height="11" rx="2" fill="#0b870b"/><path d="M2.5 5.7 L4.6 7.8 L8.7 3.4" stroke="#fff" stroke-width="1.8" fill="none"/></svg>
<svg class="a" style="left:1345.5px;top:699px;" width="11" height="11" viewBox="0 0 11 11"><rect x="0" y="0" width="11" height="11" rx="2" fill="#0b870b"/><path d="M2.5 5.7 L4.6 7.8 L8.7 3.4" stroke="#fff" stroke-width="1.8" fill="none"/></svg>
<svg class="a" style="left:1492px;top:699px;" width="12" height="12" viewBox="0 0 12 12"><circle cx="6" cy="6" r="5.7" fill="#e10a0a"/><path d="M3.8 3.8 L8.2 8.2 M8.2 3.8 L3.8 8.2" stroke="#fff" stroke-width="1.7"/></svg>
<div class="t" style="left:1630.5px;top:699.46px;font-size:12.1px;font-weight:normal;color:#444;transform:translateX(-50%);">100000</div>
<svg class="a" style="left:1716px;top:699px;" width="13" height="11" viewBox="0 0 13 11"><path d="M9 1.5 H2.2 Q1 1.5 1 2.7 V8.8 Q1 10 2.2 10 H8.3 Q9.5 10 9.5 8.8 V6" stroke="#d42a2a" stroke-width="1.3" fill="none"/><path d="M4.5 7.5 L5 5.5 L10.5 0.3 L12.3 2 L6.8 7.3 Z" fill="#d42a2a"/></svg>
<svg class="a" style="left:1808px;top:700px;" width="12" height="10" viewBox="0 0 12 10"><path d="M4 1 H2 Q1 1 1 2 V8 Q1 9 2 9 H4" stroke="#d42a2a" stroke-width="1.3" fill="none"/><path d="M3.5 3.5 H6.5 V0.8 L11 5 L6.5 9.2 V6.5 H3.5 Z" fill="#e00"/></svg>
<div class="a" style="left:261px;top:765px;width:1607px;height:1px;background:#ececec"></div>
<div class="t" style="left:320.5px;top:740.56px;font-size:12.1px;font-weight:normal;color:#444;transform:translateX(-50%);">8217597366</div>
<div class="t" style="left:463.5px;top:740.56px;font-size:12.1px;font-weight:normal;color:#444;transform:translateX(-50%);">ABHILASH M V</div>
<div class="t" style="left:606px;top:740.56px;font-size:12.1px;font-weight:normal;color:#444;transform:translateX(-50%);">1222142</div>
<div class="t" style="left:721px;top:740.56px;font-size:12.1px;font-weight:normal;color:#444;transform:translateX(-50%);">IEB - 74219</div>
<div class="t" style="left:863px;top:740.56px;font-size:12.1px;font-weight:normal;color:#444;transform:translateX(-50%);">01-02-2025</div>
<svg class="a" style="left:1151.5px;top:740px;" width="11" height="11" viewBox="0 0 11 11"><rect x="0" y="0" width="11" height="11" rx="2" fill="#0b870b"/><path d="M2.5 5.7 L4.6 7.8 L8.7 3.4" stroke="#fff" stroke-width="1.8" fill="none"/></svg>
<svg class="a" style="left:1240.5px;top:740px;" width="11" height="11" viewBox="0 0 11 11"><rect x="0" y="0" width="11" height="11" rx="2" fill="#0b870b"/><path d="M2.5 5.7 L4.6 7.8 L8.7 3.4" stroke="#fff" stroke-width="1.8" fill="none"/></svg>
<svg class="a" style="left:1345.5px;top:740px;" width="11" height="11" viewBox="0 0 11 11"><rect x="0" y="0" width="11" height="11" rx="2" fill="#0b870b"/><path d="M2.5 5.7 L4.6 7.8 L8.7 3.4" stroke="#fff" stroke-width="1.8" fill="none"/></svg>
<svg class="a" style="left:1492px;top:740px;" width="12" height="12" viewBox="0 0 12 12"><circle cx="6" cy="6" r="5.7" fill="#e10a0a"/><path d="M3.8 3.8 L8.2 8.2 M8.2 3.8 L3.8 8.2" stroke="#fff" stroke-width="1.7"/></svg>
<div class="t" style="left:1630.5px;top:740.56px;font-size:12.1px;font-weight:normal;color:#444;transform:translateX(-50%);">100000</div>
<svg class="a" style="left:1716px;top:740px;" width="13" height="11" viewBox="0 0 13 11"><path d="M9 1.5 H2.2 Q1 1.5 1 2.7 V8.8 Q1 10 2.2 10 H8.3 Q9.5 10 9.5 8.8 V6" stroke="#d42a2a" stroke-width="1.3" fill="none"/><path d="M4.5 7.5 L5 5.5 L10.5 0.3 L12.3 2 L6.8 7.3 Z" fill="#d42a2a"/></svg>
<svg class="a" style="left:1808px;top:741px;" width="12" height="10" viewBox="0 0 12 10"><path d="M4 1 H2 Q1 1 1 2 V8 Q1 9 2 9 H4" stroke="#d42a2a" stroke-width="1.3" fill="none"/><path d="M3.5 3.5 H6.5 V0.8 L11 5 L6.5 9.2 V6.5 H3.5 Z" fill="#e00"/></svg>
<div class="a" style="left:261px;top:806px;width:1607px;height:1px;background:#ececec"></div>
<div class="t" style="left:320.5px;top:781.66px;font-size:12.1px;font-weight:normal;color:#444;transform:translateX(-50%);">8904890439</div>
<div class="t" style="left:463.5px;top:781.66px;font-size:12.1px;font-weight:normal;color:#444;transform:translateX(-50%);">PRAKASH N</div>
<div class="t" style="left:606px;top:781.66px;font-size:12.1px;font-weight:normal;color:#444;transform:translateX(-50%);">1222137</div>
<div class="t" style="left:721px;top:781.66px;font-size:12.1px;font-weight:normal;color:#444;transform:translateX(-50%);">IEB - 74216</div>
<div class="t" style="left:863px;top:781.66px;font-size:12.1px;font-weight:normal;color:#444;transform:translateX(-50%);">01-06-2025</div>
<svg class="a" style="left:1151.5px;top:781px;" width="11" height="11" viewBox="0 0 11 11"><rect x="0" y="0" width="11" height="11" rx="2" fill="#0b870b"/><path d="M2.5 5.7 L4.6 7.8 L8.7 3.4" stroke="#fff" stroke-width="1.8" fill="none"/></svg>
<svg class="a" style="left:1240.5px;top:781px;" width="11" height="11" viewBox="0 0 11 11"><rect x="0" y="0" width="11" height="11" rx="2" fill="#0b870b"/><path d="M2.5 5.7 L4.6 7.8 L8.7 3.4" stroke="#fff" stroke-width="1.8" fill="none"/></svg>
<svg class="a" style="left:1345.5px;top:781px;" width="11" height="11" viewBox="0 0 11 11"><rect x="0" y="0" width="11" height="11" rx="2" fill="#0b870b"/><path d="M2.5 5.7 L4.6 7.8 L8.7 3.4" stroke="#fff" stroke-width="1.8" fill="none"/></svg>
<svg class="a" style="left:1492px;top:781px;" width="12" height="12" viewBox="0 0 12 12"><circle cx="6" cy="6" r="5.7" fill="#e10a0a"/><path d="M3.8 3.8 L8.2 8.2 M8.2 3.8 L3.8 8.2" stroke="#fff" stroke-width="1.7"/></svg>
<div class="t" style="left:1630.5px;top:781.66px;font-size:12.1px;font-weight:normal;color:#444;transform:translateX(-50%);">100000</div>
<svg class="a" style="left:1716px;top:781px;" width="13" height="11" viewBox="0 0 13 11"><path d="M9 1.5 H2.2 Q1 1.5 1 2.7 V8.8 Q1 10 2.2 10 H8.3 Q9.5 10 9.5 8.8 V6" stroke="#d42a2a" stroke-width="1.3" fill="none"/><path d="M4.5 7.5 L5 5.5 L10.5 0.3 L12.3 2 L6.8 7.3 Z" fill="#d42a2a"/></svg>
<svg class="a" style="left:1808px;top:782px;" width="12" height="10" viewBox="0 0 12 10"><path d="M4 1 H2 Q1 1 1 2 V8 Q1 9 2 9 H4" stroke="#d42a2a" stroke-width="1.3" fill="none"/><path d="M3.5 3.5 H6.5 V0.8 L11 5 L6.5 9.2 V6.5 H3.5 Z" fill="#e00"/></svg>
<div class="a" style="left:261px;top:848px;width:1607px;height:1px;background:#ececec"></div>
<div class="t" style="left:320.5px;top:822.76px;font-size:12.1px;font-weight:normal;color:#444;transform:translateX(-50%);">9632465257</div>
<div class="t" style="left:463.5px;top:822.76px;font-size:12.1px;font-weight:normal;color:#444;transform:translateX(-50%);">MAHENDRA S M</div>
<div class="t" style="left:606px;top:822.76px;font-size:12.1px;font-weight:normal;color:#444;transform:translateX(-50%);">1222125</div>
<div class="t" style="left:721px;top:822.76px;font-size:12.1px;font-weight:normal;color:#444;transform:translateX(-50%);">IEB - 74218</div>
<div class="t" style="left:863px;top:822.76px;font-size:12.1px;font-weight:normal;color:#444;transform:translateX(-50%);">01-08-2025</div>
<svg class="a" style="left:1151.5px;top:822px;" width="11" height="11" viewBox="0 0 11 11"><rect x="0" y="0" width="11" height="11" rx="2" fill="#0b870b"/><path d="M2.5 5.7 L4.6 7.8 L8.7 3.4" stroke="#fff" stroke-width="1.8" fill="none"/></svg>
<svg class="a" style="left:1240.5px;top:822px;" width="11" height="11" viewBox="0 0 11 11"><rect x="0" y="0" width="11" height="11" rx="2" fill="#0b870b"/><path d="M2.5 5.7 L4.6 7.8 L8.7 3.4" stroke="#fff" stroke-width="1.8" fill="none"/></svg>
<svg class="a" style="left:1345.5px;top:822px;" width="11" height="11" viewBox="0 0 11 11"><rect x="0" y="0" width="11" height="11" rx="2" fill="#0b870b"/><path d="M2.5 5.7 L4.6 7.8 L8.7 3.4" stroke="#fff" stroke-width="1.8" fill="none"/></svg>
<svg class="a" style="left:1492px;top:822px;" width="12" height="12" viewBox="0 0 12 12"><circle cx="6" cy="6" r="5.7" fill="#e10a0a"/><path d="M3.8 3.8 L8.2 8.2 M8.2 3.8 L3.8 8.2" stroke="#fff" stroke-width="1.7"/></svg>
<div class="t" style="left:1630.5px;top:822.76px;font-size:12.1px;font-weight:normal;color:#444;transform:translateX(-50%);">100000</div>
<svg class="a" style="left:1716px;top:822px;" width="13" height="11" viewBox="0 0 13 11"><path d="M9 1.5 H2.2 Q1 1.5 1 2.7 V8.8 Q1 10 2.2 10 H8.3 Q9.5 10 9.5 8.8 V6" stroke="#d42a2a" stroke-width="1.3" fill="none"/><path d="M4.5 7.5 L5 5.5 L10.5 0.3 L12.3 2 L6.8 7.3 Z" fill="#d42a2a"/></svg>
<svg class="a" style="left:1808px;top:823px;" width="12" height="10" viewBox="0 0 12 10"><path d="M4 1 H2 Q1 1 1 2 V8 Q1 9 2 9 H4" stroke="#d42a2a" stroke-width="1.3" fill="none"/><path d="M3.5 3.5 H6.5 V0.8 L11 5 L6.5 9.2 V6.5 H3.5 Z" fill="#e00"/></svg>
<div class="a" style="left:261px;top:889px;width:1607px;height:1px;background:#ececec"></div>
<div class="t" style="left:320.5px;top:863.86px;font-size:12.1px;font-weight:normal;color:#444;transform:translateX(-50%);">9742246474</div>
<div class="t" style="left:463.5px;top:863.86px;font-size:12.1px;font-weight:normal;color:#444;transform:translateX(-50%);">PAVAN K N</div>
<div class="t" style="left:606px;top:863.86px;font-size:12.1px;font-weight:normal;color:#444;transform:translateX(-50%);">1222135</div>
<div class="t" style="left:721px;top:863.86px;font-size:12.1px;font-weight:normal;color:#444;transform:translateX(-50%);">IEB - 74222</div>
<div class="t" style="left:863px;top:863.86px;font-size:12.1px;font-weight:normal;color:#444;transform:translateX(-50%);">01-08-2025</div>
<svg class="a" style="left:1151.5px;top:864px;" width="11" height="11" viewBox="0 0 11 11"><rect x="0" y="0" width="11" height="11" rx="2" fill="#0b870b"/><path d="M2.5 5.7 L4.6 7.8 L8.7 3.4" stroke="#fff" stroke-width="1.8" fill="none"/></svg>
<svg class="a" style="left:1240.5px;top:864px;" width="11" height="11" viewBox="0 0 11 11"><rect x="0" y="0" width="11" height="11" rx="2" fill="#0b870b"/><path d="M2.5 5.7 L4.6 7.8 L8.7 3.4" stroke="#fff" stroke-width="1.8" fill="none"/></svg>
<svg class="a" style="left:1345.5px;top:864px;" width="11" height="11" viewBox="0 0 11 11"><rect x="0" y="0" width="11" height="11" rx="2" fill="#0b870b"/><path d="M2.5 5.7 L4.6 7.8 L8.7 3.4" stroke="#fff" stroke-width="1.8" fill="none"/></svg>
<svg class="a" style="left:1492px;top:863px;" width="12" height="12" viewBox="0 0 12 12"><circle cx="6" cy="6" r="5.7" fill="#e10a0a"/><path d="M3.8 3.8 L8.2 8.2 M8.2 3.8 L3.8 8.2" stroke="#fff" stroke-width="1.7"/></svg>
<div class="t" style="left:1630.5px;top:863.86px;font-size:12.1px;font-weight:normal;color:#444;transform:translateX(-50%);">100000</div>
<svg class="a" style="left:1716px;top:864px;" width="13" height="11" viewBox="0 0 13 11"><path d="M9 1.5 H2.2 Q1 1.5 1 2.7 V8.8 Q1 10 2.2 10 H8.3 Q9.5 10 9.5 8.8 V6" stroke="#d42a2a" stroke-width="1.3" fill="none"/><path d="M4.5 7.5 L5 5.5 L10.5 0.3 L12.3 2 L6.8 7.3 Z" fill="#d42a2a"/></svg>
<svg class="a" style="left:1808px;top:864px;" width="12" height="10" viewBox="0 0 12 10"><path d="M4 1 H2 Q1 1 1 2 V8 Q1 9 2 9 H4" stroke="#d42a2a" stroke-width="1.3" fill="none"/><path d="M3.5 3.5 H6.5 V0.8 L11 5 L6.5 9.2 V6.5 H3.5 Z" fill="#e00"/></svg>
<div class="a" style="left:261px;top:930px;width:1607px;height:1px;background:#ececec"></div>
<div class="t" style="left:320.5px;top:904.96px;font-size:12.1px;font-weight:normal;color:#444;transform:translateX(-50%);">9743998229</div>
<div class="t" style="left:463.5px;top:904.96px;font-size:12.1px;font-weight:normal;color:#444;transform:translateX(-50%);">VIJAY KUMAR L</div>
<div class="t" style="left:606px;top:904.96px;font-size:12.1px;font-weight:normal;color:#444;transform:translateX(-50%);">1222117</div>
<div class="t" style="left:721px;top:904.96px;font-size:12.1px;font-weight:normal;color:#444;transform:translateX(-50%);">IEB - 74202</div>
<div class="t" style="left:863px;top:904.96px;font-size:12.1px;font-weight:normal;color:#444;transform:translateX(-50%);">01-08-2025</div>
<svg class="a" style="left:1151.5px;top:905px;" width="11" height="11" viewBox="0 0 11 11"><rect x="0" y="0" width="11" height="11" rx="2" fill="#0b870b"/><path d="M2.5 5.7 L4.6 7.8 L8.7 3.4" stroke="#fff" stroke-width="1.8" fill="none"/></svg>
<svg class="a" style="left:1240.5px;top:905px;" width="11" height="11" viewBox="0 0 11 11"><rect x="0" y="0" width="11" height="11" rx="2" fill="#0b870b"/><path d="M2.5 5.7 L4.6 7.8 L8.7 3.4" stroke="#fff" stroke-width="1.8" fill="none"/></svg>
<svg class="a" style="left:1345.5px;top:905px;" width="11" height="11" viewBox="0 0 11 11"><rect x="0" y="0" width="11" height="11" rx="2" fill="#0b870b"/><path d="M2.5 5.7 L4.6 7.8 L8.7 3.4" stroke="#fff" stroke-width="1.8" fill="none"/></svg>
<svg class="a" style="left:1492px;top:904px;" width="12" height="12" viewBox="0 0 12 12"><circle cx="6" cy="6" r="5.7" fill="#e10a0a"/><path d="M3.8 3.8 L8.2 8.2 M8.2 3.8 L3.8 8.2" stroke="#fff" stroke-width="1.7"/></svg>
<div class="t" style="left:1630.5px;top:904.96px;font-size:12.1px;font-weight:normal;color:#444;transform:translateX(-50%);">100000</div>
<svg class="a" style="left:1716px;top:905px;" width="13" height="11" viewBox="0 0 13 11"><path d="M9 1.5 H2.2 Q1 1.5 1 2.7 V8.8 Q1 10 2.2 10 H8.3 Q9.5 10 9.5 8.8 V6" stroke="#d42a2a" stroke-width="1.3" fill="none"/><path d="M4.5 7.5 L5 5.5 L10.5 0.3 L12.3 2 L6.8 7.3 Z" fill="#d42a2a"/></svg>
<svg class="a" style="left:1808px;top:905px;" width="12" height="10" viewBox="0 0 12 10"><path d="M4 1 H2 Q1 1 1 2 V8 Q1 9 2 9 H4" stroke="#d42a2a" stroke-width="1.3" fill="none"/><path d="M3.5 3.5 H6.5 V0.8 L11 5 L6.5 9.2 V6.5 H3.5 Z" fill="#e00"/></svg>
<div class="a" style="left:261px;top:971px;width:1607px;height:1px;background:#ececec"></div>
<div class="t" style="left:320.5px;top:946.06px;font-size:12.1px;font-weight:normal;color:#444;transform:translateX(-50%);">7090082687</div>
<div class="t" style="left:463.5px;top:946.06px;font-size:12.1px;font-weight:normal;color:#444;transform:translateX(-50%);">SUHAIL PASHA</div>
<div class="t" style="left:606px;top:946.06px;font-size:12.1px;font-weight:normal;color:#444;transform:translateX(-50%);">1222105</div>
<div class="t" style="left:721px;top:946.06px;font-size:12.1px;font-weight:normal;color:#444;transform:translateX(-50%);">IEB - 74204</div>
<div class="t" style="left:863px;top:946.06px;font-size:12.1px;font-weight:normal;color:#444;transform:translateX(-50%);">01-08-2025</div>
<svg class="a" style="left:1151.5px;top:946px;" width="11" height="11" viewBox="0 0 11 11"><rect x="0" y="0" width="11" height="11" rx="2" fill="#0b870b"/><path d="M2.5 5.7 L4.6 7.8 L8.7 3.4" stroke="#fff" stroke-width="1.8" fill="none"/></svg>
<svg class="a" style="left:1240.5px;top:946px;" width="11" height="11" viewBox="0 0 11 11"><rect x="0" y="0" width="11" height="11" rx="2" fill="#0b870b"/><path d="M2.5 5.7 L4.6 7.8 L8.7 3.4" stroke="#fff" stroke-width="1.8" fill="none"/></svg>
<svg class="a" style="left:1345.5px;top:946px;" width="11" height="11" viewBox="0 0 11 11"><rect x="0" y="0" width="11" height="11" rx="2" fill="#0b870b"/><path d="M2.5 5.7 L4.6 7.8 L8.7 3.4" stroke="#fff" stroke-width="1.8" fill="none"/></svg>
<svg class="a" style="left:1492px;top:945px;" width="12" height="12" viewBox="0 0 12 12"><circle cx="6" cy="6" r="5.7" fill="#e10a0a"/><path d="M3.8 3.8 L8.2 8.2 M8.2 3.8 L3.8 8.2" stroke="#fff" stroke-width="1.7"/></svg>
<div class="t" style="left:1630.5px;top:946.06px;font-size:12.1px;font-weight:normal;color:#444;transform:translateX(-50%);">100000</div>
<svg class="a" style="left:1716px;top:946px;" width="13" height="11" viewBox="0 0 13 11"><path d="M9 1.5 H2.2 Q1 1.5 1 2.7 V8.8 Q1 10 2.2 10 H8.3 Q9.5 10 9.5 8.8 V6" stroke="#d42a2a" stroke-width="1.3" fill="none"/><path d="M4.5 7.5 L5 5.5 L10.5 0.3 L12.3 2 L6.8 7.3 Z" fill="#d42a2a"/></svg>
<svg class="a" style="left:1808px;top:946px;" width="12" height="10" viewBox="0 0 12 10"><path d="M4 1 H2 Q1 1 1 2 V8 Q1 9 2 9 H4" stroke="#d42a2a" stroke-width="1.3" fill="none"/><path d="M3.5 3.5 H6.5 V0.8 L11 5 L6.5 9.2 V6.5 H3.5 Z" fill="#e00"/></svg>
<div class="a" style="left:224px;top:980px;width:1680px;height:52px;background:#e9e9e9"></div>
<div class="t" style="left:1064px;top:1000.94px;font-size:10.7px;font-weight:bold;color:#222;transform:translateX(-50%);">2025 © Idea Infinity IT Solutions (P)Ltd.(TRM V 2.0)</div>
<div class="a" style="left:1731px;top:1015px;width:30px;height:20px;background:#0a8ee0;border-radius:5px 5px 0 0"></div>
<div class="t" style="left:1746px;top:1025.69px;font-size:11px;font-weight:bold;color:#fff;transform:translateX(-50%);">1</div>
<div class="a" style="left:0px;top:1032px;width:1920px;height:48px;background:linear-gradient(90deg,#f2f2f2 0px,#e8e8e8 150px,#dddddd 320px,#ececec 530px,#e6e6e6 700px,#e4e4e4 1000px,#dbdbdb 1300px,#e0e0e0 1650px,#e9e9e9 1920px)"></div>
<div class="a" style="left:0px;top:1032px;width:1920px;height:1px;background:#bdbdbd"></div>
<div class="a" style="left:20px;top:1044px;width:22px;height:22px;border-radius:50%;background:radial-gradient(circle at 40% 35%,#fbb92c,#f08a10)"></div>
<div class="a" style="left:29px;top:1053px;width:14px;height:9px;border-radius:6px;background:#d7e6f5;border:1px solid #aec6de"></div>
<div class="t" style="left:50px;top:1042.27px;font-size:11.5px;font-weight:normal;color:#1a1a1a;">26°C</div>
<div class="t" style="left:50px;top:1057.84px;font-size:12px;font-weight:normal;color:#555;">Mostly sunny</div>
<svg class="a" style="left:705px;top:1045px;" width="22" height="22" viewBox="0 0 22 22"><rect x="0" y="0" width="10.5" height="10.5" fill="#1c8ae6"/><rect x="11.5" y="0" width="10.5" height="10.5" fill="#2b9af0"/><rect x="0" y="11.5" width="10.5" height="10.5" fill="#137ad6"/><rect x="11.5" y="11.5" width="10.5" height="10.5" fill="#1a86e0"/></svg>
<div class="a" style="left:743px;top:1041px;width:218px;height:30px;background:#f8f8f9;border:1px solid #dadada;border-radius:15px"></div>
<svg class="a" style="left:751px;top:1047px;" width="18" height="18" viewBox="0 0 18 18"><circle cx="7.5" cy="7.5" r="5.5" fill="none" stroke="#1a1a1a" stroke-width="1.6"/><path d="M11.5 11.5 L16 16" stroke="#1a1a1a" stroke-width="1.8"/></svg>
<div class="t" style="left:778px;top:1049.73px;font-size:14.5px;font-weight:normal;color:#444;">Search</div>
<svg class="a" style="left:905px;top:1043px;" width="52" height="24" viewBox="0 0 52 24"><path d="M2 14 Q10 4 20 10 Q30 16 40 8 Q46 5 50 9" stroke="#f28c28" stroke-width="3" fill="none"/><path d="M2 18 Q10 9 20 15 Q30 21 40 13 Q46 10 50 14" stroke="#1f9b3a" stroke-width="3" fill="none"/><path d="M14 12 Q24 2 38 6 L44 4 L40 12 Q30 20 22 16 Z" fill="#c9c9c9"/></svg>
<svg class="a" style="left:973px;top:1044px;" width="22" height="22" viewBox="0 0 22 22"><rect x="6" y="2" width="15" height="15" fill="#e8e8e8" stroke="#cfcfcf"/><rect x="1" y="7" width="15" height="14" fill="#222"/><rect x="6" y="7" width="10" height="9" fill="#9a9a9a"/></svg>
<svg class="a" style="left:1018px;top:1043px;" width="22" height="25" viewBox="0 0 22 25"><rect x="1" y="1" width="20" height="23" rx="2" fill="#7a8796"/><rect x="4" y="4" width="14" height="4" fill="#5fd0f5"/><g fill="#d7dde3"><rect x="4" y="10" width="3.5" height="3"/><rect x="9" y="10" width="3.5" height="3"/><rect x="4" y="15" width="3.5" height="3"/><rect x="9" y="15" width="3.5" height="3"/><rect x="4" y="20" width="3.5" height="2.5"/><rect x="9" y="20" width="3.5" height="2.5"/></g><rect x="14" y="10" width="4" height="12.5" fill="#1f6fc0"/></svg>
<svg class="a" style="left:1061px;top:1044px;" width="25" height="24" viewBox="0 0 25 24"><rect x="6" y="1" width="18" height="22" rx="1.5" fill="#1d6f42"/><rect x="6" y="6" width="18" height="6" fill="#21a366"/><rect x="6" y="12" width="18" height="6" fill="#107c41"/><rect x="1" y="5" width="13" height="14" rx="1.5" fill="#107c41"/><path d="M4 8 L11 16 M11 8 L4 16" stroke="#fff" stroke-width="2"/></svg>
<svg class="a" style="left:1105px;top:1044px;" width="25" height="24" viewBox="0 0 25 24"><rect x="6" y="1" width="18" height="22" rx="1.5" fill="#185abd"/><rect x="6" y="1" width="18" height="6" fill="#41a5ee"/><rect x="6" y="7" width="18" height="6" fill="#2b7cd3"/><rect x="1" y="5" width="13" height="14" rx="1.5" fill="#185abd"/><path d="M3 8 L5 16 L7.5 10 L10 16 L12 8" stroke="#fff" stroke-width="1.5" fill="none"/></svg>
<div class="a" style="left:1144px;top:1038px;width:37px;height:37px;background:#f7f7f8;border-radius:5px"></div>
<svg class="a" style="left:1149px;top:1043px;" width="26" height="26" viewBox="0 0 26 26"><circle cx="13" cy="13" r="12" fill="#db4437"/><path d="M13 13 L24.4 9.3 A12 12 0 0 1 6.5 23.1 Z" fill="#f4c20d"/><path d="M13 13 L6.5 23.1 A12 12 0 0 1 2.8 6.5 Z" fill="#0f9d58"/><circle cx="13" cy="13" r="5.4" fill="#fff"/><circle cx="13" cy="13" r="4.3" fill="#4285f4"/></svg>
<div class="a" style="left:1152px;top:1071px;width:17px;height:3px;background:#2db35d;border-radius:2px"></div>
<svg class="a" style="left:1193px;top:1057px;" width="25" height="23" viewBox="0 0 25 23"><rect x="1" y="1" width="18" height="20" rx="2" fill="#f7f7f7"/><path d="M3 12 V4 Q3 3 4 3 H12" stroke="#d23b2b" stroke-width="2.4" stroke-dasharray="2.5 1.6" fill="none"/><path d="M10 8 L15 18 M16 8 L12 16" stroke="#5a5f66" stroke-width="2"/><circle cx="20" cy="13" r="2.3" fill="none" stroke="#2f8fe0" stroke-width="1.5"/><path d="M15 17 L18.5 14.5 M14 19 L13 23" stroke="#2f8fe0" stroke-width="1.5"/></svg>
<svg class="a" style="left:1675px;top:1050px;" width="13" height="8" viewBox="0 0 13 8"><path d="M1 7 L6.5 1.5 L12 7" stroke="#1a1a1a" stroke-width="1.4" fill="none"/></svg>
<svg class="a" style="left:1705px;top:1049px;" width="18" height="15" viewBox="0 0 18 15"><path d="M3 11 Q0 11 0.8 8 Q1.5 5 5 5.5 Q6 1.5 10 1.5 Q15 1.5 16 6 Q17.5 8 16 11 Z" fill="#9a9a9a" stroke="#1a1a1a" stroke-width="1.3"/><path d="M2 1 L15 14" stroke="#1a1a1a" stroke-width="1.4"/></svg>
<div class="t" style="left:1751.5px;top:1043.27px;font-size:11.5px;font-weight:normal;color:#1a1a1a;transform:translateX(-50%);">ENG</div>
<div class="t" style="left:1751.5px;top:1059.27px;font-size:11.5px;font-weight:normal;color:#1a1a1a;transform:translateX(-50%);">IN</div>
<svg class="a" style="left:1781px;top:1047px;" width="18" height="18" viewBox="0 0 18 18"><rect x="1" y="1.5" width="12" height="10" fill="none" stroke="#1a1a1a" stroke-width="1.3"/><path d="M4 15 H10 M7 11.5 V15" stroke="#1a1a1a" stroke-width="1.3"/><rect x="12" y="1" width="4" height="4.5" rx="1.5" fill="#fff" stroke="#1a1a1a" stroke-width="1.1"/><path d="M14 5.5 V16" stroke="#1a1a1a" stroke-width="1.3"/></svg>
<svg class="a" style="left:1805px;top:1048px;" width="17" height="14" viewBox="0 0 17 14"><path d="M1 5 H4 L8 1.5 V12.5 L4 9 H1 Z" fill="none" stroke="#1a1a1a" stroke-width="1.2"/><path d="M10.5 4.5 Q12 7 10.5 9.5 M12.5 3 Q15 7 12.5 11 M14.5 1.5 Q17.5 7 14.5 12.5" stroke="#1a1a1a" stroke-width="1.1" fill="none"/></svg>
<div class="t" style="left:1900px;top:1043.27px;font-size:11.5px;font-weight:normal;color:#1a1a1a;transform:translateX(-100%);">17:54</div>
<div class="t" style="left:1900px;top:1059.27px;font-size:11.5px;font-weight:normal;color:#1a1a1a;transform:translateX(-100%);">20-08-2025</div>
</body></html>
